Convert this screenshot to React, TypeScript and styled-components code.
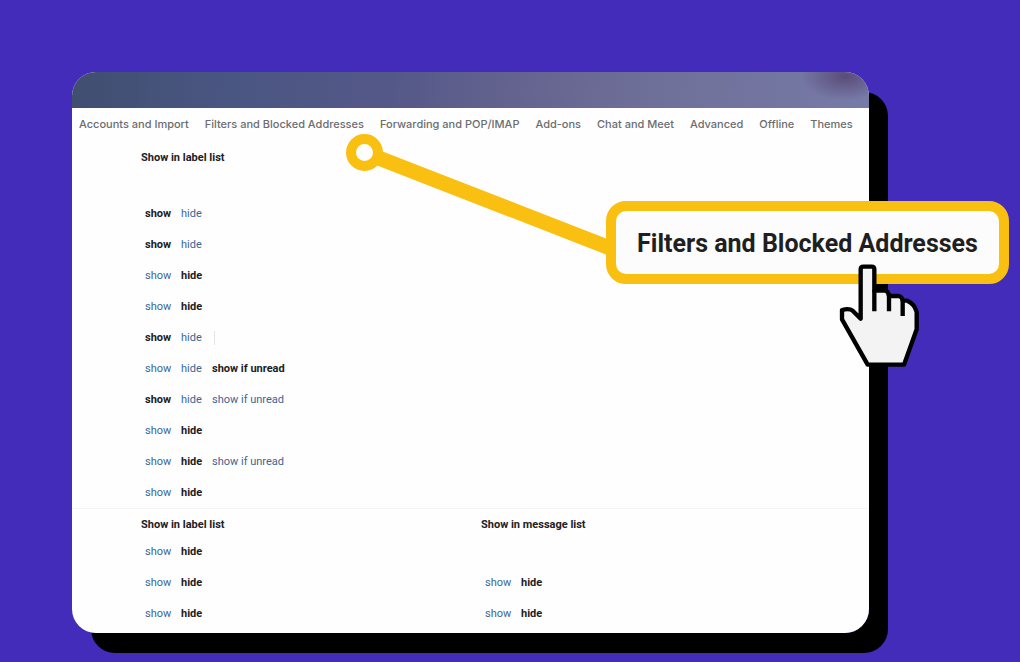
import React from "react";
import styled, { createGlobalStyle } from "styled-components";

const GlobalStyle = createGlobalStyle`
  *, *::before, *::after { box-sizing: border-box; }
  body {
    margin: 0;
    background: #442cbb;
    font-family: Roboto, "Liberation Sans", sans-serif;
    font-size: 11px;
    line-height: 16px;
    color: #202124;
  }
`;

const Page = styled.main`
  min-height: 100vh;
  padding: 72px 151px 28px 72px;
`;

const Stage = styled.div`
  position: relative;
`;

const Card = styled.section`
  overflow: hidden;
  padding-bottom: 4px;
  border-radius: 24px;
  background: #fefefe;
`;

const Shadow = styled.div`
  border-radius: 24px;
  box-shadow: 19px 20px 0 #000;
`;

const Banner = styled.div`
  height: 36px;
  background:
    radial-gradient(ellipse 44px 24px at 97% 12%, #5a4c7a 0%, #5a4c7a00 100%),
    linear-gradient(95deg, #404e70 0%, #4a5682 20%, #545888 40%, #64638f 55%, #70719b 75%, #7376a1 90%, #777ba8 100%);
`;

const Tabs = styled.nav`
  display: flex;
  align-items: center;
  gap: 16px;
  height: 34px;
  padding: 0 0 2px 7px;
`;

const Tab = styled.a`
  font-family: Inter, "Liberation Sans", sans-serif;
  font-weight: 500;
  color: #6b6d70;
  text-decoration: none;
  white-space: nowrap;
`;

const Settings = styled.div<{ $divided?: boolean }>`
  padding-left: 69px;
  border-top: ${(p) => (p.$divided ? "1px solid #f5f5f6" : "none")};
`;

const LabelTable = styled.table`
  width: 100%;
  table-layout: fixed;
  border-collapse: collapse;
`;

const Heading = styled.th<{ $roomy?: boolean }>`
  width: 340px;
  padding: 8px 0 ${(p) => (p.$roomy ? "32px" : "3px")};
  text-align: left;
  font-weight: 700;

  &:last-child { width: auto; }
`;

const Cell = styled.td`
  height: 31px;
  padding: 0 0 0 4px;
`;

const Choices = styled.div`
  display: flex;
  align-items: center;
  gap: 9px;
`;

const Choice = styled.a<{ $active: boolean }>`
  min-width: ${(p) => (p.children === "show" ? "27px" : "22px")};
  color: ${(p) => (p.$active ? "#1c1c1e" : "#3b6694")};
  font-weight: ${(p) => (p.$active ? 700 : 400)};
  text-decoration: none;
  white-space: nowrap;
`;

const Separator = styled.span`
  width: 1px;
  height: 14px;
  margin-left: 2px;
  background: #e4e5e8;
`;

const Annotation = styled.div`
  position: absolute;
  top: 60px;
  left: 272px;
  display: flex;
`;

const Connector = styled.svg`
  display: block;
  width: 264px;
  height: 130px;
  margin-right: -2px;
`;

const Callout = styled.button`
  align-self: flex-start;
  height: 83px;
  width: 403px;
  margin-top: 69px;
  padding: 2px 0 0;
  border: 10px solid #f9c011;
  border-radius: 20px;
  background: #fcfcfc;
  color: #1f1f21;
  font: 700 25px/32px Roboto, "Liberation Sans", sans-serif;
  white-space: nowrap;
`;

const Pointer = styled.svg`
  position: absolute;
  top: 130px;
  left: 492px;
  width: 86px;
  height: 108px;
`;

const tabs = [
  "Accounts and Import",
  "Filters and Blocked Addresses",
  "Forwarding and POP/IMAP",
  "Add-ons",
  "Chat and Meet",
  "Advanced",
  "Offline",
  "Themes",
];

type Setting = { options: string[]; active: string; separator?: boolean };

const pair = ["show", "hide"];
const triple = ["show", "hide", "show if unread"];

const systemLabels: Setting[] = [
  { options: pair, active: "show" },
  { options: pair, active: "show" },
  { options: pair, active: "hide" },
  { options: pair, active: "hide" },
  { options: pair, active: "show", separator: true },
  { options: triple, active: "show if unread" },
  { options: triple, active: "show" },
  { options: pair, active: "hide" },
  { options: triple, active: "hide" },
  { options: pair, active: "hide" },
];

const hidden: Setting = { options: pair, active: "hide" };
const categories: [Setting, Setting | null][] = [
  [hidden, null],
  [hidden, hidden],
  [hidden, hidden],
];

function SettingChoices({ setting }: { setting: Setting }) {
  return (
    <Choices>
      {setting.options.map((option) => (
        <Choice key={option} href="#" $active={option === setting.active}>
          {option}
        </Choice>
      ))}
      {setting.separator && <Separator />}
    </Choices>
  );
}

export default function App() {
  return (
    <Page>
      <GlobalStyle />
      <Stage>
        <Shadow>
          <Card>
            <Banner />
            <Tabs>
              {tabs.map((tab) => (
                <Tab key={tab} href="#">{tab}</Tab>
              ))}
            </Tabs>
            <Settings>
              <LabelTable>
                <thead>
                  <tr><Heading scope="col" $roomy>Show in label list</Heading></tr>
                </thead>
                <tbody>
                  {systemLabels.map((setting, i) => (
                    <tr key={i}><Cell><SettingChoices setting={setting} /></Cell></tr>
                  ))}
                </tbody>
              </LabelTable>
            </Settings>
            <Settings $divided>
              <LabelTable>
                <thead>
                  <tr>
                    <Heading scope="col">Show in label list</Heading>
                    <Heading scope="col">Show in message list</Heading>
                  </tr>
                </thead>
                <tbody>
                  {categories.map(([label, message], i) => (
                    <tr key={i}>
                      <Cell><SettingChoices setting={label} /></Cell>
                      <Cell>{message && <SettingChoices setting={message} />}</Cell>
                    </tr>
                  ))}
                </tbody>
              </LabelTable>
            </Settings>
          </Card>
        </Shadow>
        <Annotation>
          <Connector viewBox="0 0 264 130" aria-hidden="true">
            <path d="M20.500 20.500L266 116" stroke="#f9c011" strokeWidth="15" />
            <circle cx="20.500" cy="20.500" r="13.500" fill="#fefefe" stroke="#f9c011" strokeWidth="10" />
          </Connector>
          <Callout type="button">Filters and Blocked Addresses</Callout>
          <Pointer viewBox="48 36 258 324" aria-hidden="true">
            <path
              d="M122 206V58Q122 50 130 50H155Q163 50 163 58V122H195Q205 123 207 138H237Q247 141 248 152H262Q284 162 290 186V238L252 344H143L66 208V180Q88 174 98 182Z"
              fill="#f3f3f3"
              stroke="#000"
              strokeWidth="13"
              strokeLinejoin="round"
            />
            <path d="M163 120V184M207 136V184M248 150V198" fill="none" stroke="#000" strokeWidth="13" />
          </Pointer>
        </Annotation>
      </Stage>
    </Page>
  );
}
